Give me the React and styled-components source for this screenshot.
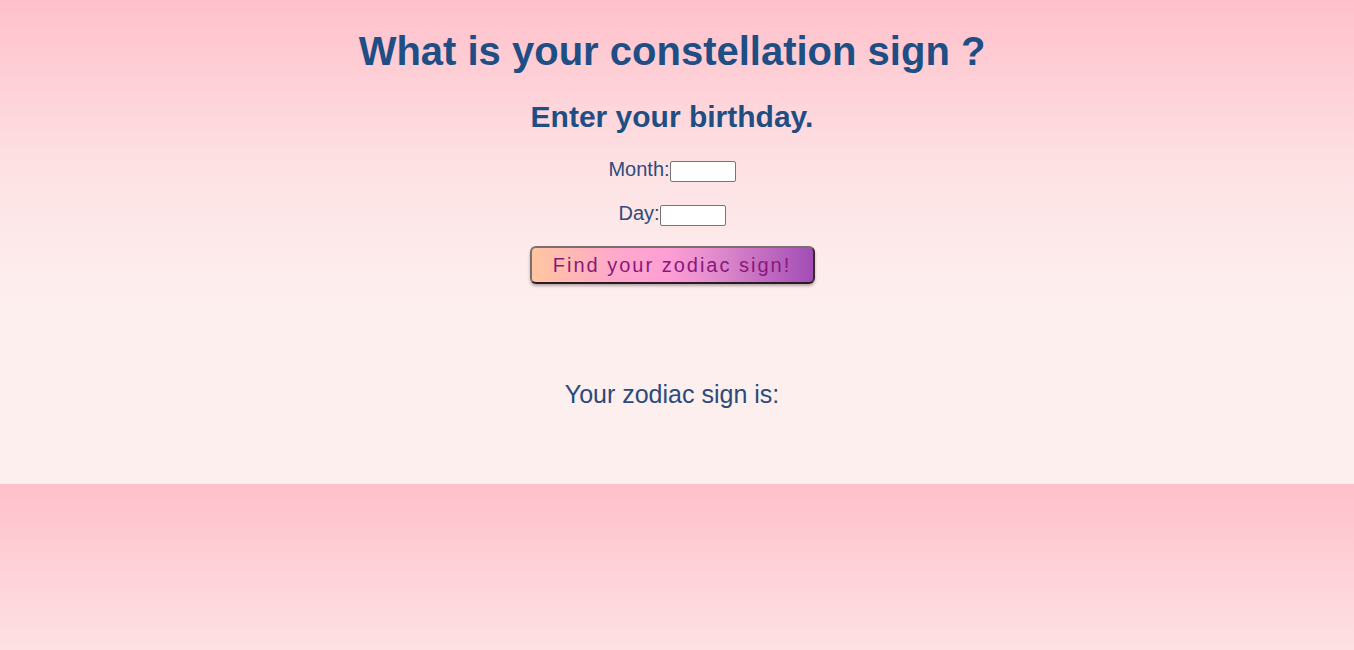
import React from "react";
import styled, { createGlobalStyle } from "styled-components";

const GlobalStyle = createGlobalStyle`
    html, body {
        margin: 0;
        padding: 0;
    }
    body {
        font-family: "Liberation Sans", Arial, sans-serif;
        background: linear-gradient(to bottom, #ffc0cb 0%, #fde2e4 35%, #fdefee 62%, #fdefee 100%);
    }
`;

const Page = styled.div`
    height: 484px;
    box-sizing: border-box;
    padding: 28px 10px 0 0;
    display: flex;
    flex-direction: column;
    align-items: center;
`;

const Title = styled.h1`
    margin: 0;
    font-size: 40px;
    font-weight: bold;
    line-height: 46px;
    color: #1f4e85;
`;

const SubTitle = styled.h2`
    margin: 25px 0 0;
    font-size: 30px;
    font-weight: bold;
    line-height: 35px;
    color: #1f4e85;
`;

const Row = styled.div`
    margin-top: ${(p) => p.$top}px;
    height: 23px;
    display: flex;
    align-items: flex-start;
    font-size: 20px;
    line-height: 23px;
    color: #2f4a7c;
`;

const Field = styled.input`
    box-sizing: border-box;
    width: 66px;
    height: 21px;
    margin: 3px 0 0;
    padding: 1px 2px;
    border: 1px solid #767676;
    border-radius: 2px;
    background: #fff;
    font-size: 13px;
`;

const FindButton = styled.button`
    margin-top: 21px;
    width: 285px;
    height: 38px;
    box-sizing: border-box;
    border: 2px solid;
    border-color: #7a6e70 #3a2a30 #2a1a22 #7a6e70;
    border-radius: 6px;
    background: linear-gradient(to right, #ffc6a0 0%, #ffa8cc 30%, #ff9fd6 48%, #e28ccd 65%, #a24db6 100%);
    box-shadow: 0 2px 3px rgba(0, 0, 0, 0.3);
    font-family: "Liberation Sans", Arial, sans-serif;
    font-size: 20px;
    letter-spacing: 2px;
    color: #8a1878;
    cursor: pointer;
`;

const Result = styled.p`
    margin: 96px 0 0;
    font-size: 25px;
    line-height: 28px;
    color: #2c4a7a;
`;

export default function App() {
    return (
        <>
            <GlobalStyle />
            <Page>
                <Title>What is your constellation sign ?</Title>
                <SubTitle>Enter your birthday.</SubTitle>
                <Row $top={24}>
                    Month:<Field type="text" />
                </Row>
                <Row $top={21}>
                    Day:<Field type="text" />
                </Row>
                <FindButton>Find your zodiac sign!</FindButton>
                <Result>Your zodiac sign is:</Result>
            </Page>
        </>
    );
}
